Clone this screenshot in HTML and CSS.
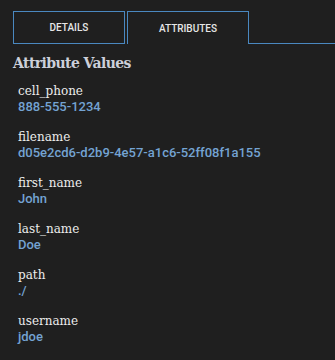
FILE: index.html
```html
<!DOCTYPE html>
<html lang="en">
<head>
    <meta charset="UTF-8">
    <meta name="viewport" content="width=device-width, initial-scale=1.0">
    <title>Attributes</title>
    <link rel="stylesheet" href="styles.css">
</head>
<body>
    <div class="tabs">
        <div class="tab">Details</div>
        <div class="tab active">Attributes</div>
        <div class="tab-rest"></div>
    </div>
    <h2 class="section-title">Attribute Values</h2>
    <div class="attr-list">
        <div class="attr">
            <div class="attr-name">cell_phone</div>
            <div class="attr-value">888-555-1234</div>
        </div>
        <div class="attr">
            <div class="attr-name">filename</div>
            <div class="attr-value">d05e2cd6-d2b9-4e57-a1c6-52ff08f1a155</div>
        </div>
        <div class="attr">
            <div class="attr-name">first_name</div>
            <div class="attr-value">John</div>
        </div>
        <div class="attr">
            <div class="attr-name">last_name</div>
            <div class="attr-value">Doe</div>
        </div>
        <div class="attr">
            <div class="attr-name">path</div>
            <div class="attr-value">./</div>
        </div>
        <div class="attr">
            <div class="attr-name">username</div>
            <div class="attr-value">jdoe</div>
        </div>
    </div>
</body>
</html>
```

FILE: styles.css
```css
body {
    margin: 0;
    background-color: #1f1f1f;
    font-family: Roboto, 'Liberation Sans', sans-serif;
}
.tabs {
    display: flex;
    padding: 11px 0 0 13px;
}
.tab {
    box-sizing: border-box;
    height: 33px;
    border: 1px solid #4a88c0;
    display: flex;
    justify-content: center;
    align-items: center;
    font-size: 10px;
    font-weight: 500;
    text-transform: uppercase;
    color: #e6e6e6;
    width: 112px;
    margin-right: 2px;
}
.tab.active {
    width: 122px;
    border-bottom: none;
    margin-right: 0;
}
.tab-rest {
    flex: 1;
    border-bottom: 1px solid #4a88c0;
}
.section-title {
    margin: 9px 0 0 13px;
    font-family: 'DejaVu Serif', serif;
    font-size: 14px;
    letter-spacing: -0.6px;
    font-weight: bold;
    color: #ccd0da;
    line-height: 20px;
}
.attr-list {
    padding: 10px 0 0 18px;
}
.attr {
    margin-bottom: 14px;
}
.attr-name {
    font-family: 'DejaVu Serif', serif;
    font-size: 12px;
    line-height: 16px;
    color: #ececec;
}
.attr-value {
    font-size: 13px;
    font-weight: 500;
    line-height: 16px;
    color: #74a3d2;
}
```
